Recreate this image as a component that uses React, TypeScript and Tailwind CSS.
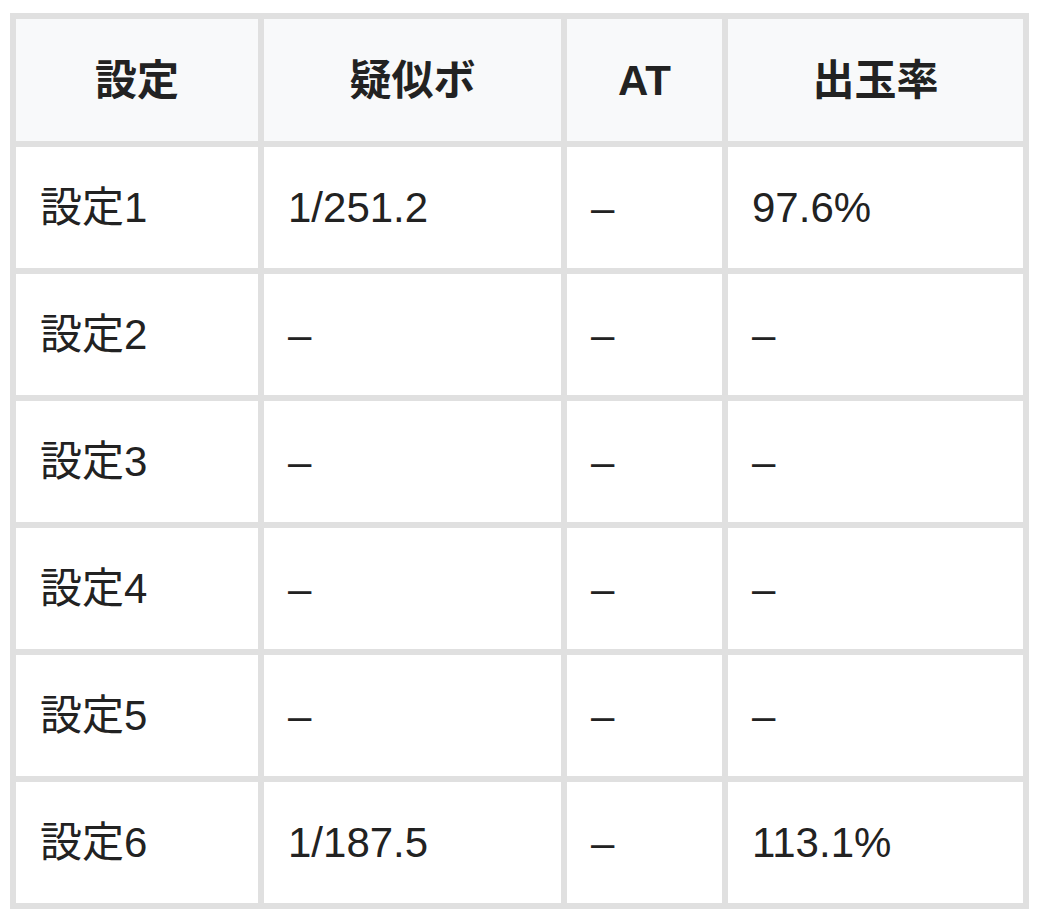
const header = ["設定", "疑似ボ", "AT", "出玉率"];

const rows = [
  ["設定1", "1/251.2", "–", "97.6%"],
  ["設定2", "–", "–", "–"],
  ["設定3", "–", "–", "–"],
  ["設定4", "–", "–", "–"],
  ["設定5", "–", "–", "–"],
  ["設定6", "1/187.5", "–", "113.1%"],
];

export default function App() {
  return (
    <div
      className="min-h-screen bg-white pl-[10px] pt-[13px] text-[#222222]"
      style={{ fontFamily: '"Liberation Sans", "Noto Sans CJK JP", sans-serif' }}
    >
      <div className="grid w-max grid-cols-[242px_297px_155px_295px] auto-rows-[121px] grid-rows-[122px] gap-[6px] bg-[#e0e0e0] p-[6px]">
        {header.map((h) => (
          <div
            key={h}
            className="flex items-center justify-center bg-[#f8f9fa] text-[42px] font-bold"
          >
            {h}
          </div>
        ))}
        {rows.map((row) =>
          row.map((cell, i) => (
            <div
              key={row[0] + i}
              className="flex items-center bg-white px-6 text-[42px]"
            >
              {cell}
            </div>
          ))
        )}
      </div>
    </div>
  );
}
